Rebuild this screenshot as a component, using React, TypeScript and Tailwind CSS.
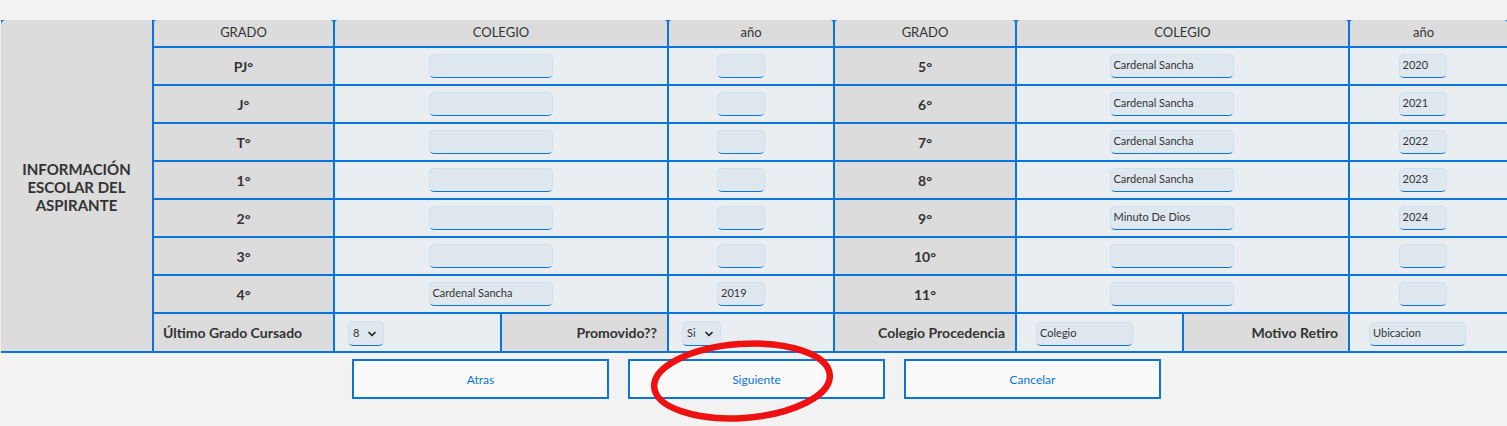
import { ChevronDown } from 'lucide-react';

const left = [
  { grado: 'PJ°', colegio: '', anio: '' },
  { grado: 'J°', colegio: '', anio: '' },
  { grado: 'T°', colegio: '', anio: '' },
  { grado: '1°', colegio: '', anio: '' },
  { grado: '2°', colegio: '', anio: '' },
  { grado: '3°', colegio: '', anio: '' },
  { grado: '4°', colegio: 'Cardenal Sancha', anio: '2019' },
];

const right = [
  { grado: '5°', colegio: 'Cardenal Sancha', anio: '2020' },
  { grado: '6°', colegio: 'Cardenal Sancha', anio: '2021' },
  { grado: '7°', colegio: 'Cardenal Sancha', anio: '2022' },
  { grado: '8°', colegio: 'Cardenal Sancha', anio: '2023' },
  { grado: '9°', colegio: 'Minuto De Dios', anio: '2024' },
  { grado: '10°', colegio: '', anio: '' },
  { grado: '11°', colegio: '', anio: '' },
];

function Field({ value, width }: { value: string; width: string }) {
  return (
    <div
      className={`flex h-[24px] items-center rounded-[5px] border border-[#cfe0ee] border-b-[#0a74da] bg-[#dfe7ef] px-[3px] text-[11px] text-[#333] ${width}`}
    >
      {value}
    </div>
  );
}

function Select({ value }: { value: string }) {
  return (
    <div className="flex h-[25px] items-center gap-[7px] rounded-[5px] border border-[#cfe0ee] border-b-[#0a74da] bg-[#dfe7ef] pl-[4px] pr-[5px] text-[11px] text-[#333]">
      <span>{value}</span>
      <ChevronDown size={12} strokeWidth={3.5} className="text-[#222]" />
    </div>
  );
}

const gray = 'bg-[#dcdcdc]';
const light = 'bg-[#e9eef2]';

export default function App() {
  return (
    <div
      className="relative h-[426px] w-[1507px] overflow-hidden bg-[#f2f2f2] pt-[20px]"
      style={{ fontFamily: 'Lato, "Open Sans", sans-serif' }}
    >
      <div className="ml-[1px] grid grid-cols-[151px_179px_165px_165px_164px_180px_165px_164px_157px] grid-rows-[26px_repeat(7,36px)_37px] gap-[2px] bg-[#0a74da] pb-[2px] text-[#333]">
        <div
          className={`${gray} row-span-9 flex items-center justify-center rounded-tl-[5px] pt-[2px] text-center text-[15px] font-bold leading-[18px]`}
        >
          INFORMACIÓN
          <br />
          ESCOLAR DEL
          <br />
          ASPIRANTE
        </div>

        <div className={`${gray} flex items-center justify-center rounded-t-[3px] text-[13px]`}>GRADO</div>
        <div className={`${gray} col-span-2 flex items-center justify-center rounded-t-[3px] text-[13px]`}>COLEGIO</div>
        <div className={`${gray} flex items-center justify-center rounded-t-[3px] text-[13px]`}>año</div>
        <div className={`${gray} flex items-center justify-center rounded-t-[3px] text-[13px]`}>GRADO</div>
        <div className={`${gray} col-span-2 flex items-center justify-center rounded-t-[3px] text-[13px]`}>COLEGIO</div>
        <div className={`${gray} flex items-center justify-center rounded-t-[3px] pr-[10px] text-[13px]`}>año</div>

        {left.map((l, i) => {
          const r = right[i];
          return [
            <div key={`lg${i}`} className={`${gray} flex items-center justify-center text-[14px] font-bold`}>
              {l.grado}
            </div>,
            <div key={`lc${i}`} className={`${light} col-span-2 flex items-center justify-center pb-[1px] pr-[21px]`}>
              <Field value={l.colegio} width="w-[124px]" />
            </div>,
            <div key={`la${i}`} className={`${light} flex items-center justify-center pb-[1px] pr-[20px]`}>
              <Field value={l.anio} width="w-[48px]" />
            </div>,
            <div key={`rg${i}`} className={`${gray} flex items-center justify-center text-[14px] font-bold`}>
              {r.grado}
            </div>,
            <div key={`rc${i}`} className={`${light} col-span-2 flex items-center justify-center pb-[1px] pr-[22px]`}>
              <Field value={r.colegio} width="w-[124px]" />
            </div>,
            <div key={`ra${i}`} className={`${light} flex items-center justify-center pb-[1px] pr-[12px]`}>
              <Field value={r.anio} width="w-[48px]" />
            </div>,
          ];
        })}

        <div className={`${gray} flex items-center pl-[9px] text-[14px] font-bold`}>Último Grado Cursado</div>
        <div className={`${light} flex items-center pl-[13px] pt-[2px]`}>
          <Select value="8" />
        </div>
        <div className={`${gray} flex items-center justify-end pr-[10px] text-[14px] font-bold`}>Promovido??</div>
        <div className={`${light} flex items-center pl-[13px] pt-[2px]`}>
          <Select value="Si" />
        </div>
        <div className={`${gray} flex items-center justify-end pr-[10px] text-[14px] font-bold`}>Colegio Procedencia</div>
        <div className={`${light} flex items-center pl-[19px] pt-[2px]`}>
          <Field value="Colegio" width="w-[97px]" />
        </div>
        <div className={`${gray} flex items-center justify-end pr-[10px] text-[14px] font-bold`}>Motivo Retiro</div>
        <div className={`${light} flex items-center pl-[19px] pt-[2px]`}>
          <Field value="Ubicacion" width="w-[97px]" />
        </div>
      </div>

      <div className="mt-[6px] flex justify-center gap-[19px] pl-[6px]">
        {['Atras', 'Siguiente', 'Cancelar'].map((b) => (
          <button
            key={b}
            type="button"
            className="flex h-[40px] w-[257px] items-center justify-center border-2 border-[#0a74da] bg-[#fafafa] pt-[2px] text-[12px] text-[#0a74da]"
          >
            {b}
          </button>
        ))}
      </div>

      <svg className="pointer-events-none absolute left-[640px] top-[332px]" width="210" height="94" viewBox="0 0 210 94">
        <ellipse
          cx="102"
          cy="49"
          rx="88"
          ry="37"
          fill="none"
          stroke="#ee1111"
          strokeWidth="6.5"
          transform="rotate(-4 102 49)"
        />
      </svg>
    </div>
  );
}
